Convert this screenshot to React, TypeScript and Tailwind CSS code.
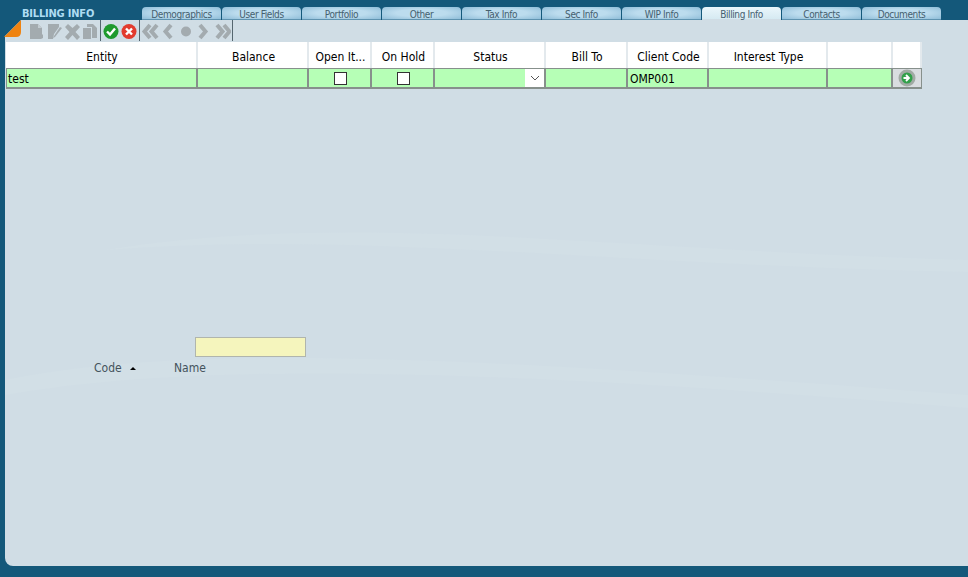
const tabs = ["Demographics","User Fields","Portfolio","Other","Tax Info","Sec Info","WIP Info","Billing Info","Contacts","Documents"];
const cols = [
  { t: "Entity", w: "w-[192px]" },
  { t: "Balance", w: "w-[111px]" },
  { t: "Open It...", w: "w-[63px]" },
  { t: "On Hold", w: "w-[63px]" },
  { t: "Status", w: "w-[111px]" },
  { t: "Bill To", w: "w-[82px]" },
  { t: "Client Code", w: "w-[81px]" },
  { t: "Interest Type", w: "w-[119px]" },
  { t: "", w: "w-[65px]" },
  { t: "", w: "w-[29px]" },
];
const G = "#a3abaf";

function Sep() {
  return <div className="w-px h-[21px] bg-[#55666f] mx-[1px] shrink-0" />;
}

function Toolbar() {
  return (
    <div className="flex items-center h-[21px] pl-[24px]">
      <svg width="70" height="21" viewBox="0 0 70 21" className="shrink-0">
        <path d="M1 4h8l4 4v6l1 1v3l-2 1H1z" fill={G} /><path d="M9 4l4 4H9z" fill="#c3ccd1" />
        <path d="M19 4h11v3l-5 7-1 5h-5z" fill={G} /><path d="M25 16l6-9 2 1-7 9-2 1z" fill={G} />
        <path d="M36 7l3-3 4.500 4 4.500-4 3 3-4.500 5 4.500 5-3 3-4.500-5-4.500 5-3-3 4.500-5z" fill={G} />
        <path d="M54 8h8v11h-8z" fill={G} /><path d="M58 4h6l4 4v10h-5V7h-5z" fill={G} />
      </svg>
      <Sep />
      <svg width="36" height="21" viewBox="0 0 36 21" className="shrink-0">
        <circle cx="9" cy="11.500" r="7.500" fill="#1f9a2e" />
        <path d="M5 11.500l3 3 5-6" stroke="#fff" strokeWidth="2.400" fill="none" />
        <circle cx="27" cy="11.500" r="7.500" fill="#e23b2e" />
        <path d="M24 8.500l6 6M30 8.500l-6 6" stroke="#fff" strokeWidth="2.400" fill="none" />
      </svg>
      <Sep />
      <svg width="90" height="21" viewBox="0 0 90 21" className="shrink-0">
        <path d="M9 5l-5.500 6.500L9 18M16 5l-5.500 6.500L16 18" stroke={G} strokeWidth="4" fill="none" />
        <path d="M30 5l-5.500 6.500L30 18" stroke={G} strokeWidth="4" fill="none" />
        <circle cx="45" cy="11.500" r="5" fill={G} />
        <path d="M59 5l5.500 6.500L59 18" stroke={G} strokeWidth="4" fill="none" />
        <path d="M76 5l5.500 6.500L76 18M83 5l5.500 6.500L83 18" stroke={G} strokeWidth="4" fill="none" />
      </svg>
      <Sep />
    </div>
  );
}

function Cell({ i }: { i: number }) {
  const base = `${cols[i].w} h-[21px] shrink-0 border-r-2 border-b-2 border-t border-[#87908c] bg-[#b6ffb6] flex items-center text-[12px] text-black ${i === 0 ? "border-l" : ""}`;
  if (i === 0) return <div className={`${base} pl-[1px] pt-[2px]`}>test</div>;
  if (i === 6) return <div className={`${base} pl-[2px] pt-[2px]`}>OMP001</div>;
  if (i === 2 || i === 3)
    return <div className={`${base} justify-center pl-[2px]`}><div className="w-[13px] h-[13px] bg-white border border-[#333]" /></div>;
  if (i === 4)
    return (
      <div className={`${base} justify-end`}>
        <div className="w-[19px] h-full bg-white flex items-center justify-center">
          <svg width="10" height="6" viewBox="0 0 10 6"><path d="M1 1l4 4 4-4" stroke="#555" fill="none" /></svg>
        </div>
      </div>
    );
  if (i === 9)
    return (
      <div className={`${cols[i].w} h-[21px] shrink-0 border-t border-r border-b-2 border-[#87908c] bg-[#d9dde0] flex items-center justify-center`}>
        <svg width="18" height="18" viewBox="0 0 18 18">
          <circle cx="9" cy="9" r="8.500" fill="#a1aaa4" />
          <circle cx="9" cy="9" r="5.500" fill="#32a04a" />
          <path d="M5.500 9h5M8 6l3 3-3 3" stroke="#fff" strokeWidth="1.800" fill="none" />
        </svg>
      </div>
    );
  return <div className={base} />;
}

export default function App() {
  return (
    <div className="w-[968px] h-[577px] overflow-hidden bg-[#14587a] flex flex-col font-['DejaVu_Sans',sans-serif] [font-stretch:condensed]">
      <div className="h-[20px] shrink-0 flex items-end">
        <div className="w-[142px] shrink-0 h-full pl-[22px] pt-[7px] text-[11px] leading-[14px] font-bold tracking-[-0.2px] text-[#aedcf3]">BILLING INFO</div>
        <div className="flex">
          {tabs.map((t) => (
            <div
              key={t}
              className={`w-[79px] mr-px h-[13px] rounded-t-[4px] border-b border-[#5f93b0] text-[10px] leading-[15px] tracking-[-0.4px] text-center text-[#45606f] ${t === "Billing Info" ? "bg-[linear-gradient(#eaf6fb,#d6eaf2)] border-b-[#d0dde5]" : "bg-[radial-gradient(ellipse_at_center,#bcdcee_45%,#8fbdd8_100%)]"}`}
            >
              {t}
            </div>
          ))}
        </div>
      </div>
      <div className="relative flex-1 ml-[5px] mb-[11px] bg-[#d0dde5] rounded-bl-[8px]">
        <svg className="absolute left-0 top-[170px]" width="963" height="220" viewBox="0 0 963 220">
          <path d="M0 190C200 150 500 170 963 205V218C500 180 200 170 0 205z" fill="#d2dfe6" />
          <path d="M100 60C350 20 600 60 963 70V82C600 75 350 40 100 60z" fill="#d2dfe6" />
        </svg>
        <svg className="absolute -left-[1px] top-0" width="17" height="18" viewBox="0 0 17 18">
          <path d="M0 0H17L0 17z" fill="#14587a" />
          <path d="M17 0V12Q17 17 12 17H0z" fill="#ef8310" />
        </svg>
        <div className="relative">
          <Toolbar />
          <div className="mt-[1px] ml-[1px] flex">
            {cols.map((c, i) => (
              <div key={i} className={`${c.w} h-[26px] pt-[4px] pl-[2px] shrink-0 bg-white border-r-2 border-[#e3e9ed] flex items-center justify-center text-[12px] text-black`}>
                {c.t}
              </div>
            ))}
          </div>
          <div className="ml-[1px] flex">
            {cols.map((_, i) => <Cell key={i} i={i} />)}
          </div>
          <div className="ml-[190px] mt-[248px] w-[111px] h-[20px] bg-[#f5f5bd] border border-[#b0b5ad]" />
          <div className="flex items-center h-[20px] pt-[2px] ml-[89px] text-[12px] text-[#44535c]">
            <span className="w-[36px]">Code</span>
            <span className="w-0 h-0 border-x-[3px] border-x-transparent border-b-[3px] border-b-black" />
            <span className="ml-[38px]">Name</span>
          </div>
        </div>
      </div>
    </div>
  );
}
